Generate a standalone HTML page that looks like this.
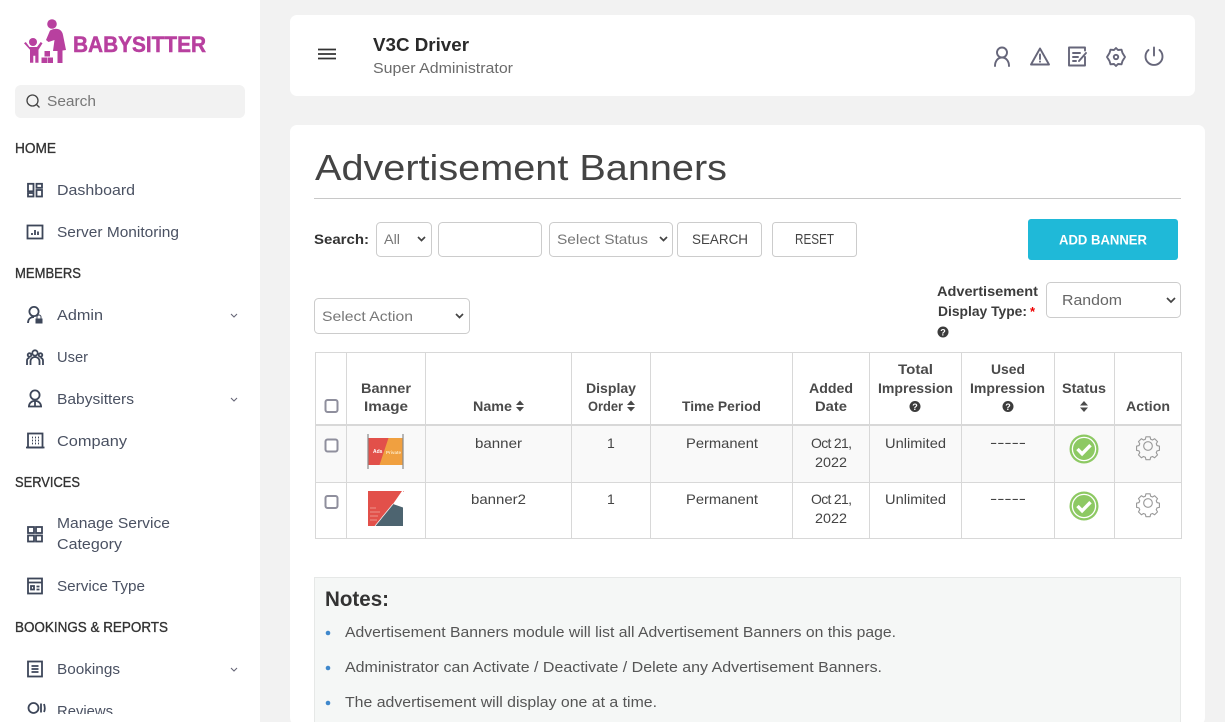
<!DOCTYPE html>
<html lang="en"><head><meta charset="utf-8"><title>Advertisement Banners</title>
<style>
html,body{margin:0;padding:0;width:1225px;height:722px;overflow:hidden;background:#f2f2f2}
svg{display:block}
text{font-family:"Liberation Sans",sans-serif;font-size:15px;fill:#444}
.nav{fill:#4a5162;font-size:15px}
.sec{fill:#333;font-size:14.5px;stroke:#333;stroke-width:.35}
.th{fill:#4a4a4a;font-size:14px;font-weight:bold}
.td{fill:#444;font-size:14px}
.ph{fill:#777;font-size:15px}
.btn{fill:#444;font-size:14px}
.note{fill:#555;font-size:15px}
.ic{fill:none;stroke:#3d4659;stroke-width:1.8}
.hi{fill:none;stroke:#66667a;stroke-width:1.9;stroke-linecap:round;stroke-linejoin:round}
.box{fill:#fff;stroke:#ccc;stroke-width:1}
.chk{fill:#fff;stroke:#8f8f9d;stroke-width:2}
.chev{fill:none;stroke:#444;stroke-width:1.7}
.schev{fill:none;stroke:#667;stroke-width:1.1}
.gl{stroke:#d8d8d8;stroke-width:1;fill:none}
.gear{fill:none;stroke:#9a9a9a;stroke-width:1.4;stroke-linejoin:round}
</style></head><body>
<svg width="1225" height="722" viewBox="0 0 1225 722" xmlns="http://www.w3.org/2000/svg">
<defs>
<g id="gear"><g transform="scale(.8)"><circle r="5.4"/><path d="M-2.6-11.5h5.2l.7 3 2.3 1 2.7-1.6 3.6 3.6-1.6 2.7 1 2.3 3 .7v5.2l-3 .7-1 2.3 1.6 2.7-3.6 3.6-2.7-1.6-2.3 1-.7 3h-5.2l-.7-3-2.3-1-2.7 1.6-3.6-3.6 1.6-2.7-1-2.3-3-.7v-5.2l3-.7 1-2.3-1.6-2.7 3.6-3.6 2.7 1.6 2.3-1z"/></g></g>
<g id="ok"><circle r="14.5" fill="#8dc963"/><circle r="11.6" fill="none" stroke="#fff" stroke-width="1.3"/><path d="M-6.5 0l4.6 4.8 8.4-8.6" fill="none" stroke="#fff" stroke-width="3.4"/></g>
<g id="sort"><path d="M-4-1L0-5.5 4-1zM-4 1L0 5.5 4 1z" fill="#4a4a4a"/></g>
<g id="q"><circle r="5.5" fill="#3c3c3c"/><text x="0" y="3.4" text-anchor="middle" style="font-size:9px;font-weight:bold;fill:#fff">?</text></g>
<clipPath id="navclip"><rect x="0" y="0" width="260" height="714"/></clipPath>
</defs>

<!-- Sidebar -->
<rect x="0" y="0" width="260" height="722" fill="#fff"/>
<g fill="#b8409f">
<circle cx="52" cy="24" r="4.8"/>
<path d="M50 30.500Q54 28 58 29Q62 30 63 35L66 50L62.500 50.500V63H57.500V51H53L54.500 40L48.500 42L46 40Z"/>
<circle cx="33" cy="42" r="4"/>
<path d="M24 43.200l1.800-1.200 3.700 5h7.500l3.700-5 1.800 1.200-4 6.500v13h-3.200v-7h-2v7h-3.300v-13z"/>
<rect x="44.500" y="51" width="5.500" height="5.500"/><rect x="41.500" y="57.500" width="5.500" height="5.500"/><rect x="47.500" y="57.500" width="5.500" height="5.500"/>
</g>
<text x="73" y="52" textLength="133" lengthAdjust="spacingAndGlyphs" style="font-size:22.500px;font-weight:bold;fill:#b8409f;stroke:#b8409f;stroke-width:.5">BABYSITTER</text>
<rect x="15" y="85" width="230" height="33" rx="6" fill="#f2f2f2"/>
<circle cx="32.500" cy="100.500" r="5.500" fill="none" stroke="#444" stroke-width="1.300"/><path d="M36.500 104.500l3 3" stroke="#444" stroke-width="1.300"/>
<text x="47" y="106" textLength="49" lengthAdjust="spacingAndGlyphs" class="ph">Search</text>

<g clip-path="url(#navclip)">
<text x="15" y="153" textLength="41" lengthAdjust="spacingAndGlyphs" class="sec">HOME</text>
<text x="57" y="195" textLength="78" lengthAdjust="spacingAndGlyphs" class="nav">Dashboard</text>
<text x="57" y="237" textLength="122" lengthAdjust="spacingAndGlyphs" class="nav">Server Monitoring</text>
<text x="15" y="278" textLength="66" lengthAdjust="spacingAndGlyphs" class="sec">MEMBERS</text>
<text x="57" y="320" textLength="46" lengthAdjust="spacingAndGlyphs" class="nav">Admin</text>
<text x="57" y="362" textLength="31" lengthAdjust="spacingAndGlyphs" class="nav">User</text>
<text x="57" y="404" textLength="77" lengthAdjust="spacingAndGlyphs" class="nav">Babysitters</text>
<text x="57" y="446" textLength="70" lengthAdjust="spacingAndGlyphs" class="nav">Company</text>
<text x="15" y="487" textLength="65" lengthAdjust="spacingAndGlyphs" class="sec">SERVICES</text>
<text x="57" y="528" textLength="113" lengthAdjust="spacingAndGlyphs" class="nav">Manage Service</text>
<text x="57" y="549" textLength="65" lengthAdjust="spacingAndGlyphs" class="nav">Category</text>
<text x="57" y="591" textLength="88" lengthAdjust="spacingAndGlyphs" class="nav">Service Type</text>
<text x="15" y="632" textLength="153" lengthAdjust="spacingAndGlyphs" class="sec">BOOKINGS &amp; REPORTS</text>
<text x="57" y="674" textLength="63" lengthAdjust="spacingAndGlyphs" class="nav">Bookings</text>
<text x="57" y="716" textLength="56" lengthAdjust="spacingAndGlyphs" class="nav">Reviews</text>

<!-- nav icons -->
<g class="ic">
<rect x="28" y="183.800" width="5.500" height="7.500"/><rect x="36.500" y="183.800" width="5.500" height="4"/><rect x="28" y="193" width="5.500" height="3.500"/><rect x="36.500" y="190" width="5.500" height="6.500"/>
<rect x="27.500" y="225.500" width="15" height="13"/><path d="M32 235v-2M35 235v-5M38 235v-3.500"/>
<circle cx="34" cy="311.500" r="4.600"/><path d="M28 323c0-4 2.500-6 6-6"/>
<circle cx="35" cy="353" r="2.700"/><circle cx="29.500" cy="355" r="1.800"/><circle cx="40.500" cy="355" r="1.800"/><path d="M30.500 365v-3.500c0-6 9-6 9 0v3.500M27 365v-4c0-2 1-3 2.500-3M43 365v-4c0-2-1-3-2.500-3"/>
<circle cx="35" cy="395" r="4.600"/><path d="M29 406.500c0-7.500 12-7.500 12 0zM35 401v5M28 406.500h14"/>
<rect x="28" y="433.500" width="14.500" height="14"/><path d="M26 447.500h18.500M32 437.500h1M35 437.500h1M38 437.500h1M32 440.500h1M35 440.500h1M38 440.500h1M32 443.500h1M35 443.500h1M38 443.500h1"/>
<rect x="28" y="527" width="6" height="6"/><rect x="36" y="527" width="6" height="6"/><rect x="28" y="535.500" width="6" height="6"/><rect x="36" y="535.500" width="6" height="6"/>
<rect x="28" y="578.500" width="14" height="15"/><path d="M28 582.500h14M31 586h3v3.500h-3zM36.500 586.500h3M36.500 589.500h3"/>
<rect x="28" y="661.500" width="14" height="15"/><path d="M31.500 666h7M31.500 669h7M31.500 672h7"/>
<circle cx="33.500" cy="708" r="5"/><path d="M41 703.500v9M44 704c1 3 1 6 0 8"/>
</g>
<path d="M35.500 318.500h7v5h-7z" fill="#3d4659"/><path d="M37 318.500v-1.500a2 2 0 0 1 4 0v1.500" fill="none" stroke="#3d4659" stroke-width="1"/>
<path class="schev" d="M231 314l3 3 3-3M231 398l3 3 3-3M231 668l3 3 3-3"/>
</g>
<rect x="0" y="714" width="260" height="8" fill="#fff"/>

<!-- Header card -->
<rect x="290" y="15" width="905" height="81" rx="7" fill="#fff"/>
<path d="M318 49.500h18M318 54h18M318 58.500h18" stroke="#333" stroke-width="1.800"/>
<text x="373" y="51" textLength="96" lengthAdjust="spacingAndGlyphs" style="font-size:18.500px;font-weight:bold;fill:#2a2a2a">V3C Driver</text>
<text x="373" y="73" textLength="140" lengthAdjust="spacingAndGlyphs" style="font-size:15px;fill:#6b6b6b">Super Administrator</text>
<g class="hi">
<circle cx="1002" cy="52.500" r="5"/><path d="M995 66c0-5 3-8.500 7-8.500s7 3.500 7 8.500"/>
<path d="M1040 48.500l9 16h-18zM1040 54.500v4.500M1040 61.500v.2"/>
<path d="M1085 57v8.500h-16v-18h16v3M1073 53h7M1073 57h5M1073 61h3M1079 61l7-8"/>
<path d="M1116 48l2 2 3.500-.3 1 3.300 2.500 4-2.500 4-1 3.300-3.500-.3-2 2-2-2-3.500.3-1-3.300-2.500-4 2.500-4 1-3.300 3.500.3z"/><circle cx="1116" cy="57" r="2.200"/>
<path d="M1148.500 50a8.500 8.500 0 1 0 11 0M1154 47.500v8"/>
</g>

<!-- Content card -->
<rect x="290" y="125" width="915" height="600" rx="7" fill="#fff"/>
<text x="315" y="180" textLength="412" lengthAdjust="spacingAndGlyphs" style="font-size:36.500px;fill:#444">Advertisement Banners</text>
<path d="M314 198.500h867" stroke="#c8c8c8"/>

<!-- Filters -->
<text x="314" y="244" textLength="55" lengthAdjust="spacingAndGlyphs" style="font-size:14px;font-weight:bold;fill:#333">Search:</text>
<rect class="box" x="376.500" y="222.500" width="55" height="34" rx="4"/>
<text x="384" y="244" textLength="16" lengthAdjust="spacingAndGlyphs" class="ph" style="font-size:14px">All</text>
<path class="chev" d="M418 237l3.500 3.500 3.500-3.500"/>
<rect class="box" x="438.500" y="222.500" width="103" height="34" rx="4"/>
<rect class="box" x="549.500" y="222.500" width="123" height="34" rx="4"/>
<text x="557" y="244" textLength="91" lengthAdjust="spacingAndGlyphs" class="ph" style="font-size:14px">Select Status</text>
<path class="chev" d="M660 237l3.500 3.500 3.500-3.500"/>
<rect class="box" x="677.500" y="222.500" width="84" height="34" rx="3"/>
<text x="692" y="244" textLength="56" lengthAdjust="spacingAndGlyphs" class="btn">SEARCH</text>
<rect class="box" x="772.500" y="222.500" width="84" height="34" rx="3"/>
<text x="795" y="244" textLength="39" lengthAdjust="spacingAndGlyphs" class="btn" style="font-size:14.500px">RESET</text>
<rect x="1028" y="219" width="150" height="41" rx="3" fill="#1fb9d8"/>
<text x="1059" y="244.500" textLength="88" lengthAdjust="spacingAndGlyphs" style="font-size:14px;font-weight:bold;fill:#fff">ADD BANNER</text>

<rect class="box" x="314.500" y="298.500" width="155" height="35" rx="4"/>
<text x="322" y="321" textLength="91" lengthAdjust="spacingAndGlyphs" class="ph" style="font-size:14px">Select Action</text>
<path class="chev" d="M456 314l3.500 3.500 3.500-3.500"/>

<text x="937" y="296" textLength="101" lengthAdjust="spacingAndGlyphs" class="th" style="fill:#3c3c3c">Advertisement</text>
<text x="938" y="316" textLength="89" lengthAdjust="spacingAndGlyphs" class="th" style="fill:#3c3c3c">Display Type:</text>
<text x="1030" y="316" style="font-size:13px;font-weight:bold;fill:#e00">*</text>
<use href="#q" x="943" y="332"/>
<rect class="box" x="1046.500" y="282.500" width="134" height="35" rx="4"/>
<text x="1062" y="305" textLength="60" lengthAdjust="spacingAndGlyphs" class="ph" style="font-size:14.500px;fill:#666">Random</text>
<path class="chev" d="M1167 298l4 4 4-4"/>

<!-- Table -->
<rect x="316" y="426" width="865" height="56" fill="#f9f9f9"/>
<path class="gl" d="M315.500 352.500h866M315.500 482.500h866M315.500 538.500h866M315.500 352v187M346.500 352v187M425.500 352v187M571.500 352v187M650.500 352v187M792.500 352v187M869.500 352v187M961.500 352v187M1054.500 352v187M1114.500 352v187M1181.500 352v187"/>
<path d="M315 425h867" stroke="#d8d8d8" stroke-width="2"/>

<rect class="chk" x="325.500" y="400" width="12" height="12" rx="2"/>
<rect class="chk" x="325.500" y="439.500" width="12" height="12" rx="2"/>
<rect class="chk" x="325.500" y="496" width="12" height="12" rx="2"/>

<text x="361" y="393" textLength="50" lengthAdjust="spacingAndGlyphs" class="th">Banner</text>
<text x="364" y="411" textLength="44" lengthAdjust="spacingAndGlyphs" class="th">Image</text>
<text x="473" y="411" textLength="39" lengthAdjust="spacingAndGlyphs" class="th">Name</text><use href="#sort" x="520" y="406"/>
<text x="586" y="393" textLength="50" lengthAdjust="spacingAndGlyphs" class="th">Display</text>
<text x="588" y="411" textLength="35" lengthAdjust="spacingAndGlyphs" class="th">Order</text><use href="#sort" x="631" y="406"/>
<text x="682" y="411" textLength="79" lengthAdjust="spacingAndGlyphs" class="th">Time Period</text>
<text x="809" y="393" textLength="44" lengthAdjust="spacingAndGlyphs" class="th">Added</text>
<text x="815" y="411" textLength="32" lengthAdjust="spacingAndGlyphs" class="th">Date</text>
<text x="898" y="374" textLength="35" lengthAdjust="spacingAndGlyphs" class="th">Total</text>
<text x="878" y="393" textLength="75" lengthAdjust="spacingAndGlyphs" class="th">Impression</text><use href="#q" x="915" y="406.500"/>
<text x="991" y="374" textLength="34" lengthAdjust="spacingAndGlyphs" class="th">Used</text>
<text x="970" y="393" textLength="75" lengthAdjust="spacingAndGlyphs" class="th">Impression</text><use href="#q" x="1008" y="406.500"/>
<text x="1062" y="393" textLength="44" lengthAdjust="spacingAndGlyphs" class="th">Status</text><use href="#sort" x="1084" y="406.500"/>
<text x="1126" y="411" textLength="44" lengthAdjust="spacingAndGlyphs" class="th">Action</text>

<!-- Row 1 -->
<rect x="368" y="438" width="35" height="27" fill="#f0a040"/>
<path d="M368.500 438h20l-9 27h-11z" fill="#e2504a"/>
<path d="M368 434v35M403 434v35" stroke="#8a8a8a" stroke-width="1.200"/>
<text x="373" y="453" style="font-size:5px;font-weight:bold;fill:#fff">Ads</text>
<text x="386" y="454" style="font-size:4.500px;font-weight:bold;fill:#fde6c0">Private</text>
<text x="475" y="448" textLength="47" lengthAdjust="spacingAndGlyphs" class="td">banner</text>
<text x="607" y="448" class="td">1</text>
<text x="686" y="448" textLength="72" lengthAdjust="spacingAndGlyphs" class="td">Permanent</text>
<text x="811" y="448" textLength="41" lengthAdjust="spacing" class="td">Oct 21,</text>
<text x="815" y="467" textLength="32" lengthAdjust="spacingAndGlyphs" class="td">2022</text>
<text x="885" y="448" textLength="61" lengthAdjust="spacingAndGlyphs" class="td">Unlimited</text>
<text x="990" y="447" textLength="36" lengthAdjust="spacingAndGlyphs" class="td">-----</text>
<use href="#ok" x="1084" y="449"/>
<use href="#gear" class="gear" x="1148" y="446"/>

<!-- Row 2 -->
<rect x="368" y="491" width="35" height="35" fill="#4d6470"/>
<path d="M368 491h36l-3 3-8 10-18 22h-7z" fill="#e2504a"/>
<path d="M375 526l18-22" stroke="#f2f2f2" stroke-width=".8"/>
<path d="M393 504l10 3.500v-16.500h-1z" fill="#fff"/>
<path d="M370 508h6M370 512h10M370 516h8M370 520h7" stroke="#f0a8a0" stroke-width=".8"/>
<text x="471" y="504" textLength="55" lengthAdjust="spacingAndGlyphs" class="td">banner2</text>
<text x="607" y="504" class="td">1</text>
<text x="686" y="504" textLength="72" lengthAdjust="spacingAndGlyphs" class="td">Permanent</text>
<text x="811" y="504" textLength="41" lengthAdjust="spacing" class="td">Oct 21,</text>
<text x="815" y="523" textLength="32" lengthAdjust="spacingAndGlyphs" class="td">2022</text>
<text x="885" y="504" textLength="61" lengthAdjust="spacingAndGlyphs" class="td">Unlimited</text>
<text x="990" y="503" textLength="36" lengthAdjust="spacingAndGlyphs" class="td">-----</text>
<use href="#ok" x="1084" y="506"/>
<use href="#gear" class="gear" x="1148" y="503"/>

<!-- Notes -->
<rect x="314.500" y="577.500" width="866" height="160" fill="#f5f7f6" stroke="#e6e8e7"/>
<text x="325" y="606" textLength="64" lengthAdjust="spacingAndGlyphs" style="font-size:21px;font-weight:bold;fill:#333">Notes:</text>
<circle cx="328" cy="633" r="2.300" fill="#3f88cc"/>
<text x="345" y="637" textLength="551" lengthAdjust="spacingAndGlyphs" class="note">Advertisement Banners module will list all Advertisement Banners on this page.</text>
<circle cx="328" cy="668" r="2.300" fill="#3f88cc"/>
<text x="345" y="672" textLength="537" lengthAdjust="spacingAndGlyphs" class="note">Administrator can Activate / Deactivate / Delete any Advertisement Banners.</text>
<circle cx="328" cy="703" r="2.300" fill="#3f88cc"/>
<text x="345" y="707" textLength="312" lengthAdjust="spacingAndGlyphs" class="note">The advertisement will display one at a time.</text>
</svg>
</body></html>
